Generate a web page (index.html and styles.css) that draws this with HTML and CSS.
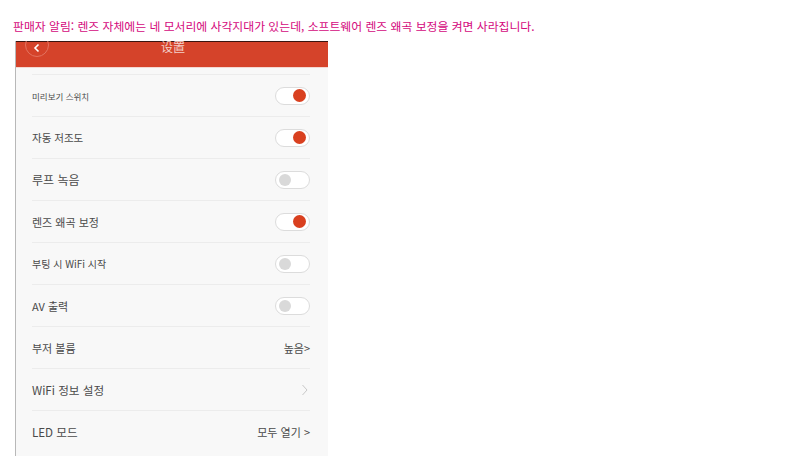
FILE: index.html
```html
<!DOCTYPE html>
<html lang="ko">
<head>
<meta charset="utf-8">
<link rel="stylesheet" href="styles.css">
</head>
<body>
<p class="notice">판매자 알림: 렌즈 자체에는 네 모서리에 사각지대가 있는데, 소프트웨어 렌즈 왜곡 보정을 켜면 사라집니다.</p>
<div class="phone">
  <div class="header">
    <span class="back"><svg width="10" height="10" viewBox="0 0 10 10"><path d="M6.5 1.5 L3 5 L6.5 8.5" fill="none" stroke="#fff" stroke-width="1.6"/></svg></span>
    <span class="title">设置</span>
  </div>
  <div class="list">
    <div class="row"><span class="label s9">미리보기 스위치</span><span class="toggle on"></span></div>
    <div class="row"><span class="label s10h">자동 저조도</span><span class="toggle on"></span></div>
    <div class="row"><span class="label s12">루프 녹음</span><span class="toggle"></span></div>
    <div class="row"><span class="label s11">렌즈 왜곡 보정</span><span class="toggle on"></span></div>
    <div class="row"><span class="label s10">부팅 시 WiFi 시작</span><span class="toggle"></span></div>
    <div class="row"><span class="label s11">AV 출력</span><span class="toggle"></span></div>
    <div class="row"><span class="label s11">부저 볼륨</span><span class="value s11">높음&gt;</span></div>
    <div class="row"><span class="label s115">WiFi 정보 설정</span><span class="chev"><svg width="8" height="12" viewBox="0 0 8 12"><path d="M1.5 1 L6 6 L1.5 11" fill="none" stroke="#c8c8c8" stroke-width="1"/></svg></span></div>
    <div class="row"><span class="label s115">LED 모드</span><span class="value s11">모두 열기 &gt;</span></div>
  </div>
</div>
</body>
</html>
```
FILE: styles.css
```css
html, body {
  margin: 0;
  padding: 0;
  background: #fff;
}
body {
  font-family: "Noto Sans CJK KR", "Noto Sans", sans-serif;
}
.notice {
  margin: 0;
  padding: 18px 0 0 13px;
  height: 23px;
  font-size: 11.85px;
  line-height: 16px;
  color: #d4087c;
  white-space: nowrap;
}
.phone {
  margin-left: 15px;
  width: 313px;
  height: 415px;
  overflow: hidden;
  background: #f8f8f8;
  border-left: 1px solid #b8b8b8;
  box-sizing: border-box;
}
.header {
  position: relative;
  height: 25px;
  background: #d5432a;
  border-top: 1px solid #3a1510;
  border-bottom: 1px solid #f4d8d2;
  display: flex;
  justify-content: center;
  align-items: flex-start;
}
.back {
  position: absolute;
  left: 9px;
  top: -9px;
  width: 24px;
  height: 24px;
  border-radius: 50%;
  border: 1px solid #e37360;
  display: flex;
  align-items: center;
  justify-content: center;
  padding-top: 6px;
  box-sizing: border-box;
}
.title {
  color: #f3d0c8;
  font-size: 12px;
  line-height: 14px;
  margin-top: -2px;
  margin-left: 2px;
}
.list {
  padding: 6px 18px 0 16px;
}
.row {
  height: 42px;
  border-top: 1px solid #ececec;
  display: flex;
  align-items: center;
  justify-content: space-between;
  box-sizing: border-box;
}
.label {
  color: #4a4a4a;
}
.value {
  color: #4a4a4a;
}
.s9 { font-size: 8.5px; }
.s10 { font-size: 10px; }
.s10h { font-size: 10.5px; }
.s11 { font-size: 11px; }
.s115 { font-size: 11.6px; }
.s12 { font-size: 12px; }
.toggle {
  width: 35px;
  height: 18px;
  border-radius: 10px;
  border: 1px solid #dcdcdc;
  background: #fff;
  box-sizing: border-box;
  display: flex;
  align-items: center;
  padding: 0 3px;
  justify-content: flex-start;
}
.toggle::after {
  content: "";
  width: 12px;
  height: 12px;
  border-radius: 50%;
  background: #d9d9d9;
}
.toggle.on {
  justify-content: flex-end;
}
.toggle.on::after {
  width: 13px;
  height: 13px;
  background: #d9401f;
}
.chev {
  display: flex;
  align-items: center;
  margin-right: 1px;
}
```
